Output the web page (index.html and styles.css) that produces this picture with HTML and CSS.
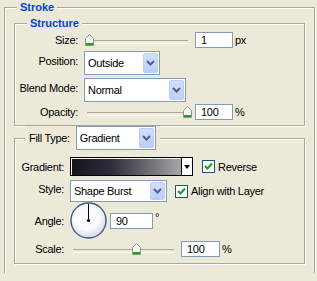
FILE: index.html
```html
<!DOCTYPE html>
<html lang="en">
<head>
  <meta charset="UTF-8" />
  <title>Stroke</title>
  <link rel="stylesheet" href="styles.css">
</head>
<body>
  <fieldset class="group outer">
    <legend class="title">Stroke</legend>

    <!-- Structure -->
    <fieldset class="group structure">
      <legend class="title sub">Structure</legend>

      <div class="row gap-2">
        <span class="lbl">Size:</span>
        <div class="slider">
          <span class="thumb" style="left: 0px">
            <svg width="9" height="12" viewBox="0 0 9 12"><path d="M0.5 4.5 L4.5 0.5 L8.5 4.5 V11.5 H0.5 Z" fill="#f6f6f2" stroke="#8c978a"/><path d="M1 10 H8" stroke="#21a121" stroke-width="2"/></svg>
          </span>
        </div>
        <span class="field">1</span>
        <span class="unit">px</span>
      </div>

      <div class="row gap-3">
        <span class="lbl raise">Position:</span>
        <div class="select w-position">
          <span class="value">Outside</span>
          <span class="drop"><svg width="9" height="6" viewBox="0 0 9 6"><polyline points="1,1 4.5,4.5 8,1" fill="none" stroke="#4d6185" stroke-width="2"/></svg></span>
        </div>
      </div>

      <div class="row gap-3">
        <span class="lbl raise">Blend Mode:</span>
        <div class="select w-blend">
          <span class="value">Normal</span>
          <span class="drop"><svg width="9" height="6" viewBox="0 0 9 6"><polyline points="1,1 4.5,4.5 8,1" fill="none" stroke="#4d6185" stroke-width="2"/></svg></span>
        </div>
      </div>

      <div class="row gap-2">
        <span class="lbl">Opacity:</span>
        <div class="slider">
          <span class="thumb" style="left: 98px">
            <svg width="9" height="12" viewBox="0 0 9 12"><path d="M0.5 4.5 L4.5 0.5 L8.5 4.5 V11.5 H0.5 Z" fill="#f6f6f2" stroke="#8c978a"/><path d="M1 10 H8" stroke="#21a121" stroke-width="2"/></svg>
          </span>
        </div>
        <span class="field">100</span>
        <span class="unit">%</span>
      </div>
    </fieldset>

    <!-- Fill -->
    <fieldset class="group fill">
      <legend class="fill-type">
        <span>Fill Type:</span>
        <div class="select w-fill">
          <span class="value">Gradient</span>
          <span class="drop"><svg width="9" height="6" viewBox="0 0 9 6"><polyline points="1,1 4.5,4.5 8,1" fill="none" stroke="#4d6185" stroke-width="2"/></svg></span>
        </div>
      </legend>

      <div class="row gap-7">
        <span class="lbl">Gradient:</span>
        <div class="gradient">
          <span class="ramp"></span>
          <span class="arrow"></span>
        </div>
        <label class="check">
          <svg width="13" height="13" viewBox="0 0 13 13"><rect x="0.5" y="0.5" width="12" height="12" fill="#fff" stroke="#1c5180"/><polyline points="3,6 5.5,8.5 10,3.5" fill="none" stroke="#21a121" stroke-width="2.2"/></svg>
          Reverse
        </label>
      </div>

      <div class="row gap-4">
        <span class="lbl raise">Style:</span>
        <div class="select w-style">
          <span class="value">Shape Burst</span>
          <span class="drop"><svg width="9" height="6" viewBox="0 0 9 6"><polyline points="1,1 4.5,4.5 8,1" fill="none" stroke="#4d6185" stroke-width="2"/></svg></span>
        </div>
        <label class="check near">
          <svg width="13" height="13" viewBox="0 0 13 13"><rect x="0.5" y="0.5" width="12" height="12" fill="#fff" stroke="#1c5180"/><polyline points="3,6 5.5,8.5 10,3.5" fill="none" stroke="#21a121" stroke-width="2.2"/></svg>
          Align with Layer
        </label>
      </div>

      <div class="row">
        <span class="lbl">Angle:</span>
        <svg class="dial" width="37" height="37" viewBox="0 0 37 37">
          <defs>
            <radialGradient id="dialFill" cx="0.45" cy="0.4" r="0.6">
              <stop offset="0.6" stop-color="#fbfbfd"/>
              <stop offset="1" stop-color="#d4d9e6"/>
            </radialGradient>
          </defs>
          <circle cx="18.5" cy="18.5" r="17.5" fill="url(#dialFill)" stroke="#44578a" stroke-width="1.4"/>
          <line x1="18.5" y1="18.5" x2="18.5" y2="2" stroke="#000" stroke-width="1"/>
          <circle cx="18.5" cy="18.5" r="1.6" fill="#000"/>
        </svg>
        <span class="field w-angle">90</span>
        <span class="unit deg">°</span>
      </div>

      <div class="row gap-2">
        <span class="lbl">Scale:</span>
        <div class="slider">
          <span class="thumb" style="left: 61px">
            <svg width="9" height="12" viewBox="0 0 9 12"><path d="M0.5 4.5 L4.5 0.5 L8.5 4.5 V11.5 H0.5 Z" fill="#f6f6f2" stroke="#8c978a"/><path d="M1 10 H8" stroke="#21a121" stroke-width="2"/></svg>
          </span>
        </div>
        <span class="field w-scale">100</span>
        <span class="unit">%</span>
      </div>
    </fieldset>
  </fieldset>
</body>
</html>
```

FILE: styles.css
```css
* {
  box-sizing: border-box;
}

body {
  margin: 0;
  overflow: hidden;
  background: #ece9d8;
  font-family: "Liberation Sans", Arial, sans-serif;
  font-size: 11px;
  letter-spacing: -0.3px;
  color: #000;
}

/* etched group boxes */
.group {
  margin: 0;
  padding: 0;
  min-width: 0;
  border: 1px solid #aca899;
  box-shadow: 1px 1px 0 #fff, inset 1px 1px 0 #fff;
}

.group legend {
  background: #ece9d8;
}

/* the outer box is cut off at the bottom of the dialog */
.outer {
  margin: 0 2px 0 4px;
  padding: 0 9px 9px 9px;
  border-bottom: 0;
  box-shadow: 1px 0 0 #fff, inset 1px 1px 0 #fff;
}

.title {
  margin-left: 3px;
  padding: 0 3px;
  line-height: 14px;
  font-weight: bold;
  letter-spacing: 0;
  color: #0046d5;
}

.title.sub {
  margin-left: 12px;
}

.structure {
  margin-top: 2px;
  padding-bottom: 5px;
}

.fill {
  padding-bottom: 6px;
}

.fill-type {
  display: flex;
  align-items: center;
  gap: 6px;
  margin: 8px 0 0 10px;
  padding: 0 4px;
}

/* rows */
.row {
  display: flex;
  align-items: center;
}

.gap-2 { margin-top: 2px; }
.gap-3 { margin-top: 3px; }
.gap-4 { margin-top: 4px; }
.gap-7 { margin-top: 7px; }

.lbl {
  flex: none;
  text-align: right;
  padding-right: 1px;
  margin-right: 5px;
}

.structure .lbl {
  width: 64px;
}

.fill .lbl {
  width: 50px;
}

.lbl.raise {
  padding-bottom: 4px;
}

/* sliders */
.slider {
  position: relative;
  width: 107px;
  height: 12px;
  margin-left: 1px;
  margin-right: 3px;
}

.slider::before {
  content: "";
  position: absolute;
  left: 2px;
  right: 4px;
  top: 6px;
  height: 2px;
  border-top: 1px solid #aca899;
  border-bottom: 1px solid #fff;
}

.thumb {
  position: absolute;
  top: 0;
  line-height: 0;
}

/* text fields */
.field {
  width: 38px;
  height: 16px;
  padding-left: 5px;
  line-height: 14px;
  border: 1px solid #7f9db9;
  background: #fff;
}

.field.w-angle {
  width: 43px;
}

.field.w-scale {
  width: 39px;
}

.unit {
  margin-left: 2px;
}

.unit.deg {
  align-self: flex-start;
  margin-top: 10px;
  line-height: 10px;
}

.dial {
  flex: none;
  margin-right: 3px;
}

/* combo boxes */
.select {
  display: flex;
  height: 24px;
  border: 1px solid #7f9db9;
  background: #fff;
}

.select .value {
  flex: 1;
  padding-left: 3px;
  line-height: 22px;
}

.select .drop {
  display: flex;
  align-items: center;
  justify-content: center;
  width: 15px;
  margin: 1px;
  border: 1px solid #bccdf7;
  border-radius: 2px;
  background: linear-gradient(#d2defd, #bccefa);
}

.w-position { width: 76px; }
.w-blend { width: 102px; }
.w-fill { width: 80px; }
.w-style { width: 97px; height: 22px; }
.w-style .value { line-height: 20px; }

/* gradient picker */
.gradient {
  display: flex;
  width: 123px;
  height: 19px;
  border: 1px solid #000;
  background: #f4f3ee;
}

.ramp {
  flex: 1;
  margin: 1px 0 0 1px;
  background: linear-gradient(to right, #15141f, #2c2b38 35%, #6c6c73 70%, #a7a7a7);
}

.arrow {
  width: 11px;
  border-left: 1px solid #000;
  background: #fff;
  display: flex;
  align-items: center;
  justify-content: center;
}

.arrow::after {
  content: "";
  border-left: 3px solid transparent;
  border-right: 3px solid transparent;
  border-top: 4px solid #000;
}

/* checkboxes */
.check {
  display: flex;
  align-items: center;
  gap: 3px;
  margin-left: 9px;
}

.check.near {
  margin-left: 8px;
}
```
